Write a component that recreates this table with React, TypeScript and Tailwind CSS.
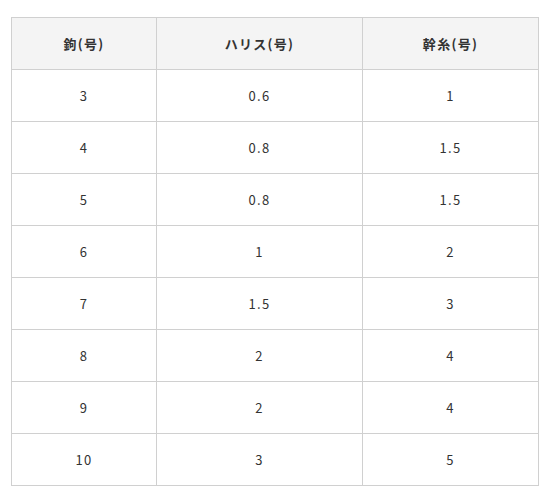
const rows: [string, string, string][] = [
  ['3', '0.6', '1'],
  ['4', '0.8', '1.5'],
  ['5', '0.8', '1.5'],
  ['6', '1', '2'],
  ['7', '1.5', '3'],
  ['8', '2', '4'],
  ['9', '2', '4'],
  ['10', '3', '5'],
];

export default function App() {
  return (
    <div className="min-h-screen bg-white pl-[11px] pt-[17px] font-['Noto_Sans_CJK_JP','Noto_Sans',sans-serif] text-[13px] tracking-[0.1em] text-[#333]">
      <table className="w-[528px] table-fixed border-collapse">
        <colgroup>
          <col className="w-[145px]" />
          <col className="w-[206px]" />
          <col />
        </colgroup>
        <thead>
          <tr className="h-[52px] bg-[#f4f4f4]">
            <th className="border border-[#d0d0d0] text-center font-bold">鉤(号)</th>
            <th className="border border-[#d0d0d0] text-center font-bold">ハリス(号)</th>
            <th className="border border-[#d0d0d0] text-center font-bold">幹糸(号)</th>
          </tr>
        </thead>
        <tbody>
          {rows.map((row, i) => (
            <tr key={i} className="h-[52px]">
              {row.map((cell, j) => (
                <td key={j} className="border border-[#d0d0d0] text-center">
                  {cell}
                </td>
              ))}
            </tr>
          ))}
        </tbody>
      </table>
    </div>
  );
}
